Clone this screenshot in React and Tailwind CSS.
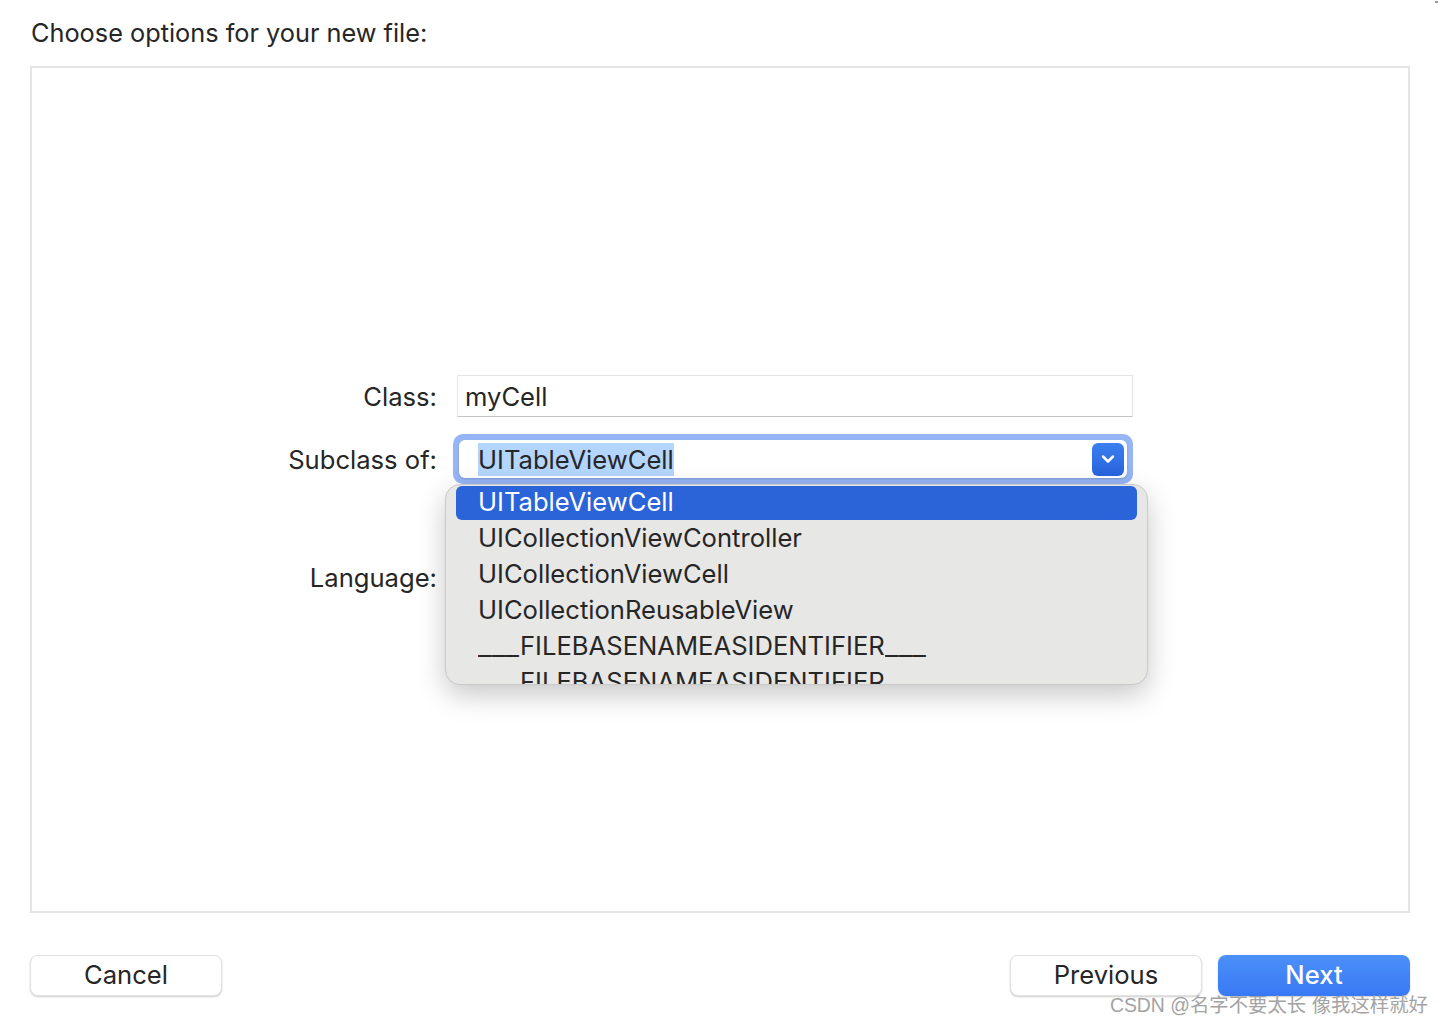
import { ChevronDown } from 'lucide-react';

const items = [
    'UICollectionViewController',
    'UICollectionViewCell',
    'UICollectionReusableView',
];

const font = { fontFamily: 'Inter, "Noto Sans", sans-serif' };

const Bars = () => (
    <span className="inline-block w-[42px]">
        <span className="inline-block origin-left scale-x-[1.17]">___</span>
    </span>
);

const Placeholder = () => (
    <>
        <Bars />FILEBASENAMEASIDENTIFIER<Bars />
    </>
);

const App = () => {
    return (
        <div className="relative w-[1444px] h-[1024px] bg-white pl-[30px] pr-[34px] flex flex-col text-[#262626]" style={font}>
            <div className="h-[66px] flex items-center pl-[1px] text-[25.3px]">
                Choose options for your new file:
            </div>

            {/* Options panel */}
            <div className="h-[847px] border-2 border-[#e4e4e4] pt-[307px]">
                <div className="grid grid-cols-[405px_676px] gap-x-[20px] text-[25.6px]">
                    <div className="h-[42px] flex items-center justify-end pt-[3px]">Class:</div>
                    <div className="h-[42px] flex items-center px-[7px] pt-[3px] bg-white border border-[#e6e6e6] border-b-[#c4c4c4]">
                        myCell
                    </div>

                    <div className="mt-[17px] h-[50px] flex items-center justify-end pt-[3px]">Subclass of:</div>
                    <div className="relative mt-[17px] h-[50px]">
                        <div className="absolute -left-[4px] right-0 top-0 bottom-0 rounded-[10px] bg-[#95b5f5] p-[6px]">
                            <div className="h-full rounded-[6px] bg-white shadow-[0_1px_2px_rgba(0,0,0,0.15)] flex items-center pl-[19px] pr-[3px]">
                                <span className="bg-[#b4d5fe] leading-[32px] pt-[1px]">UITableViewCell</span>
                                <div className="ml-auto w-[32px] h-[33px] rounded-[6px] bg-gradient-to-b from-[#3b7ff0] to-[#2763dc] flex items-center justify-center">
                                    <ChevronDown className="w-[20px] h-[20px] text-white" strokeWidth={3} />
                                </div>
                            </div>
                        </div>

                        {/* Open popup menu */}
                        <div className="absolute z-10 -left-[12px] top-[50px] w-[703px] h-[201px] rounded-[15px] bg-[#e7e7e6] border border-[#c9c9c9] shadow-[0_10px_28px_rgba(0,0,0,0.22)] overflow-hidden pt-[1px] px-[10px]">
                            <div className="h-[34px] rounded-[6px] bg-[#2b63d9] text-white flex items-center pl-[22px] pb-[2px]">
                                UITableViewCell
                            </div>
                            {items.map((item, idx) => (
                                <div key={idx} className="h-[36px] flex items-center pl-[22px]">
                                    {item}
                                </div>
                            ))}
                            <div className="h-[36px] flex items-center pl-[22px]">
                                <Placeholder />
                            </div>
                            <div className="h-[36px] flex items-center pl-[22px]">
                                <Placeholder />
                            </div>
                        </div>
                    </div>

                    <div className="mt-[75px] h-[36px] flex items-center justify-end pt-[3px]">Language:</div>
                    <div className="mt-[75px] h-[36px]" />
                </div>
            </div>

            {/* Footer buttons */}
            <div className="mt-[42px] flex items-center text-[25.6px]">
                <button className="w-[192px] h-[41px] rounded-[8px] bg-white border border-[#e2e2e2] shadow-[0_1px_2px_rgba(0,0,0,0.2)]">
                    Cancel
                </button>
                <button className="ml-auto w-[192px] h-[41px] rounded-[8px] bg-white border border-[#e2e2e2] shadow-[0_1px_2px_rgba(0,0,0,0.2)]">
                    Previous
                </button>
                <button className="ml-[16px] w-[192px] h-[41px] rounded-[8px] bg-gradient-to-b from-[#4c90f9] to-[#3978f4] text-white font-medium shadow-[0_1px_2px_rgba(0,0,0,0.2)]">
                    Next
                </button>
            </div>

            <div
                className="absolute right-[16px] bottom-[4px] text-[19.4px] text-[#a3a3a3]"
                style={{ fontFamily: '"Liberation Sans", "Noto Sans CJK SC", sans-serif' }}
            >
                CSDN @名字不要太长 像我这样就好
            </div>
            <div className="absolute right-[6px] top-[1px] w-[3px] h-[2px] bg-[#9a9a9a]" />
        </div>
    );
};

export default App;
